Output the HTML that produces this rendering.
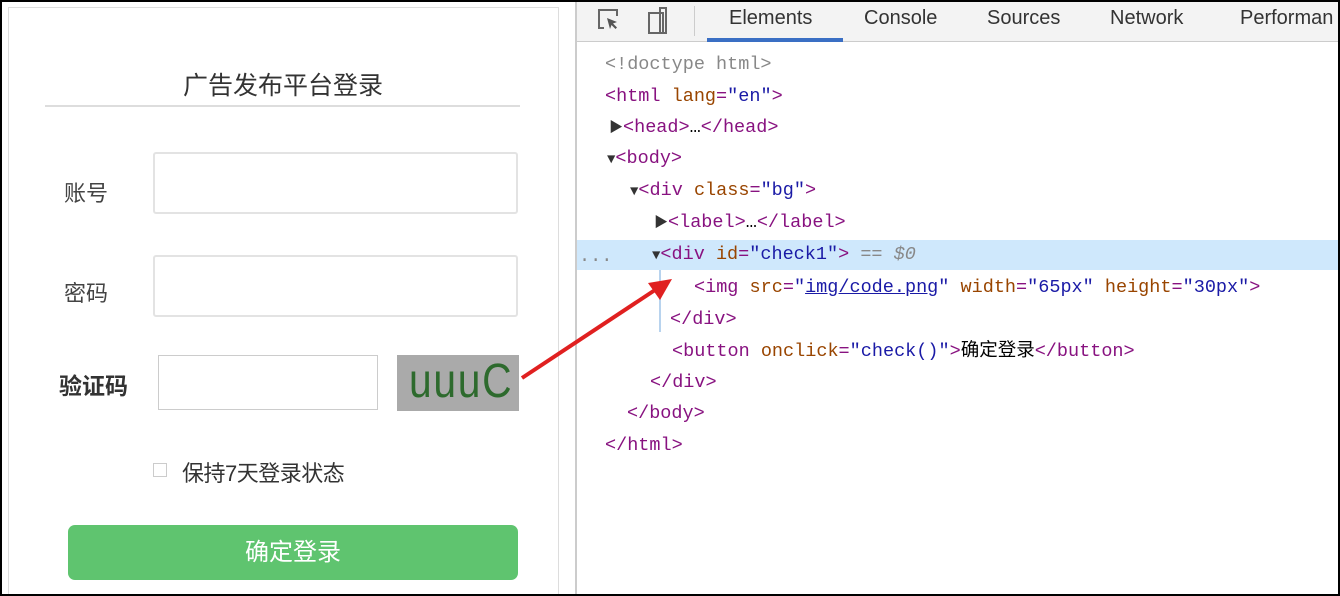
<!DOCTYPE html>
<html style="overflow:hidden;height:596px"><head><meta charset="utf-8"><style>
*{margin:0;padding:0;box-sizing:border-box}
body{width:1340px;height:596px;position:relative;overflow:hidden;background:#fff;font-family:"Liberation Sans","Noto Sans CJK SC",sans-serif}
.frame{position:absolute;left:0;top:0;width:1340px;height:596px;border:2px solid #000;z-index:10;pointer-events:none}
.a{position:absolute}
.card{left:8px;top:7px;width:551px;height:589px;border:1px solid #ddd;border-bottom:none}
.inp{border:2px solid #e3e3e3;border-radius:3px;background:#fff}
.lab{font-size:22px;color:#444}
.dt{left:575px;top:0;width:765px;height:596px;border-left:2px solid #ccc;background:#fff}
.tb{left:0;top:0;width:765px;height:42px;background:#f3f3f3;border-bottom:1px solid #ccc}
.tab{top:7px;font-size:20px;color:#333}
.code{font-family:"Liberation Mono","Noto Sans CJK SC",monospace;font-size:18.5px;white-space:pre;position:absolute;line-height:20px}
.t{color:#881280}.n{color:#994500}.v{color:#1a1aa6}.g{color:#888}
.tri{font-size:14px;color:#333}
</style></head><body>
<div class="frame"></div>
<div class="a card"></div>
<div class="a" style="left:0;top:66px;width:566px;text-align:center;font-size:25px;color:#333">广告发布平台登录</div>
<div class="a" style="left:45px;top:105px;width:475px;height:2px;background:#ddd"></div>
<div class="a lab" style="left:64px;top:176px">账号</div>
<div class="a inp" style="left:153px;top:152px;width:365px;height:62px"></div>
<div class="a lab" style="left:64px;top:276px">密码</div>
<div class="a inp" style="left:153px;top:255px;width:365px;height:62px"></div>
<div class="a lab" style="left:59px;top:367px;font-size:23px;font-weight:bold;color:#333">验证码</div>
<div class="a" style="left:158px;top:355px;width:220px;height:55px;border:1px solid #ccc"></div>
<div class="a" style="left:397px;top:355px;width:122px;height:56px;background:#aaa;overflow:hidden"><div style="color:#2d6a2d;font-size:48px;line-height:54px;transform:scaleX(0.85);transform-origin:0 0;position:absolute;left:12px;top:0;letter-spacing:2px">uuuC</div></div>
<div class="a" style="left:153px;top:463px;width:14px;height:14px;border:1px solid #ccc"></div>
<div class="a" style="left:182px;top:456px;font-size:22px;color:#333;letter-spacing:-0.5px">保持7天登录状态</div>
<div class="a" style="left:68px;top:525px;width:450px;height:55px;background:#5fc46f;border-radius:7px;color:#fff;font-size:24px;text-align:center;line-height:55px">确定登录</div>
<svg class="a" style="left:0;top:0;z-index:5" width="1340" height="596"><line x1="522" y1="378" x2="655" y2="290" stroke="#e02020" stroke-width="4"/><polygon points="672,279 648,283 660,300" fill="#e02020"/></svg>
<div class="a dt">
 <div class="a tb">
  <svg class="a" style="left:18px;top:6px" width="30" height="30"><path d="M9 22H4V4h18v6" fill="none" stroke="#666" stroke-width="2"/><path d="M12 12l10 4-4 1.5 4 4-1.5 1.5-4-4-1.5 4z" fill="#555"/></svg>
  <svg class="a" style="left:68px;top:5px" width="26" height="32"><rect x="4" y="8" width="14" height="20" fill="none" stroke="#666" stroke-width="2"/><rect x="15" y="3" width="6" height="25" fill="none" stroke="#666" stroke-width="2"/></svg>
  <div class="a" style="left:117px;top:6px;width:1px;height:30px;background:#ccc"></div>
  <div class="a tab" style="left:152px">Elements</div>
  <div class="a" style="left:130px;top:38px;width:136px;height:4px;background:#3a6fc4"></div>
  <div class="a tab" style="left:287px">Console</div>
  <div class="a tab" style="left:410px">Sources</div>
  <div class="a tab" style="left:533px">Network</div>
  <div class="a tab" style="left:663px">Performan</div>
 </div>
 <div class="a" style="left:0;top:240px;width:765px;height:30px;background:#cfe8fc"></div>
 <div class="code g" style="left:2px;top:247px">...</div>
 <div class="a" style="left:82px;top:270px;width:2px;height:62px;background:#b8d3ee"></div>
 <div class="code" style="left:28px;top:55px"><span class="g">&lt;!doctype html&gt;</span></div>
 <div class="code" style="left:28px;top:87px"><span class="t">&lt;html</span> <span class="n">lang</span><span class="t">=</span><span class="v">"en"</span><span class="t">&gt;</span></div>
 <div class="code" style="left:32px;top:118px"><span class="tri">▶</span><span class="t">&lt;head&gt;</span>…<span class="t">&lt;/head&gt;</span></div>
 <div class="code" style="left:30px;top:149px"><span class="tri">▼</span><span class="t">&lt;body&gt;</span></div>
 <div class="code" style="left:53px;top:181px"><span class="tri">▼</span><span class="t">&lt;div</span> <span class="n">class</span><span class="t">=</span><span class="v">"bg"</span><span class="t">&gt;</span></div>
 <div class="code" style="left:77px;top:213px"><span class="tri">▶</span><span class="t">&lt;label&gt;</span>…<span class="t">&lt;/label&gt;</span></div>
 <div class="code" style="left:75px;top:245px"><span class="tri">▼</span><span class="t">&lt;div</span> <span class="n">id</span><span class="t">=</span><span class="v">"check1"</span><span class="t">&gt;</span> <span class="g" style="font-style:italic">== $0</span></div>
 <div class="code" style="left:117px;top:278px"><span class="t">&lt;img</span> <span class="n">src</span><span class="t">=</span><span class="v">"<u>img/code.png</u>"</span> <span class="n">width</span><span class="t">=</span><span class="v">"65px"</span> <span class="n">height</span><span class="t">=</span><span class="v">"30px"</span><span class="t">&gt;</span></div>
 <div class="code" style="left:93px;top:310px"><span class="t">&lt;/div&gt;</span></div>
 <div class="code" style="left:95px;top:342px"><span class="t">&lt;button</span> <span class="n">onclick</span><span class="t">=</span><span class="v">"check()"</span><span class="t">&gt;</span>确定登录<span class="t">&lt;/button&gt;</span></div>
 <div class="code" style="left:73px;top:373px"><span class="t">&lt;/div&gt;</span></div>
 <div class="code" style="left:50px;top:404px"><span class="t">&lt;/body&gt;</span></div>
 <div class="code" style="left:28px;top:436px"><span class="t">&lt;/html&gt;</span></div>
</div>
</body></html>
